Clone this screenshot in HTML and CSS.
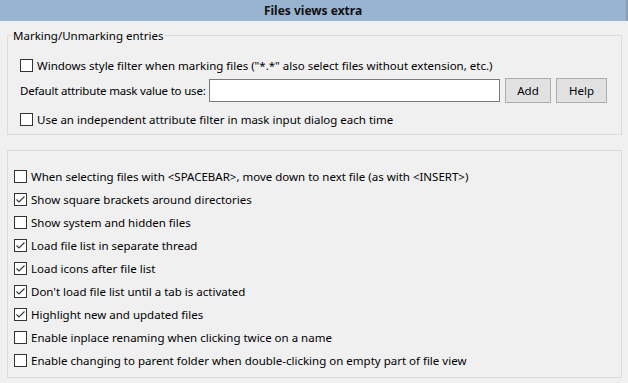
FILE: index.html
```html
<!DOCTYPE html>
<html>
<head>
<meta charset="utf-8">
<link rel="stylesheet" href="styles.css">
</head>
<body>
<div class="header">Files views extra</div>

<fieldset class="group group-marking">
  <legend class="legend">Marking/Unmarking entries</legend>
  <label class="row row-first"><span class="cb"></span><span>Windows style filter when marking files ("*.*" also select files without extension, etc.)</span></label>
  <div class="row row-mask">
    <span class="mask-label">Default attribute mask value to use:</span>
    <span class="input"></span>
    <span class="btn btn-add">Add</span>
    <span class="btn btn-help">Help</span>
  </div>
  <label class="row row-last"><span class="cb"></span><span>Use an independent attribute filter in mask input dialog each time</span></label>
</fieldset>

<div class="group group-options">
  <label class="row"><span class="cb"></span><span>When selecting files with &lt;SPACEBAR&gt;, move down to next file (as with &lt;INSERT&gt;)</span></label>
  <label class="row"><span class="cb checked"><svg viewBox="0 0 11 11" width="11" height="11"><path d="M1.5 5.5 L4 8 L9.5 2.5" fill="none" stroke="#333" stroke-width="1.1"/></svg></span><span>Show square brackets around directories</span></label>
  <label class="row"><span class="cb"></span><span>Show system and hidden files</span></label>
  <label class="row"><span class="cb checked"><svg viewBox="0 0 11 11" width="11" height="11"><path d="M1.5 5.5 L4 8 L9.5 2.5" fill="none" stroke="#333" stroke-width="1.1"/></svg></span><span>Load file list in separate thread</span></label>
  <label class="row"><span class="cb checked"><svg viewBox="0 0 11 11" width="11" height="11"><path d="M1.5 5.5 L4 8 L9.5 2.5" fill="none" stroke="#333" stroke-width="1.1"/></svg></span><span>Load icons after file list</span></label>
  <label class="row"><span class="cb checked"><svg viewBox="0 0 11 11" width="11" height="11"><path d="M1.5 5.5 L4 8 L9.5 2.5" fill="none" stroke="#333" stroke-width="1.1"/></svg></span><span>Don't load file list until a tab is activated</span></label>
  <label class="row"><span class="cb checked"><svg viewBox="0 0 11 11" width="11" height="11"><path d="M1.5 5.5 L4 8 L9.5 2.5" fill="none" stroke="#333" stroke-width="1.1"/></svg></span><span>Highlight new and updated files</span></label>
  <label class="row"><span class="cb"></span><span>Enable inplace renaming when clicking twice on a name</span></label>
  <label class="row"><span class="cb"></span><span>Enable changing to parent folder when double-clicking on empty part of file view</span></label>
</div>
</body>
</html>
```

FILE: styles.css
```css
html, body {
  margin: 0;
  padding: 0;
  background: #f0f0f0;
  font-family: "Noto Sans", "Open Sans", sans-serif;
  font-size: 11.5px;
  color: #000;
  width: 628px;
  height: 383px;
  overflow: hidden;
}

.header {
  height: 21px;
  line-height: 21px;
  background: #99b4d1;
  border-right: 2px solid #8a9fb6;
  text-align: center;
  font-weight: bold;
  font-size: 12px;
  color: #111;
  box-sizing: border-box;
}

.group {
  border: 1px solid #dcdcdc;
  box-sizing: border-box;
  width: 615px;
  margin-left: 7px;
}

.group-marking {
  margin-top: 7px;
  margin-bottom: 0;
  padding: 11px 0 3px 12px;
  min-width: 0;
}

.legend {
  padding: 0 1px;
  margin-left: -8px;
  line-height: 15px;
  height: 15px;
}

.row {
  display: flex;
  align-items: center;
  height: 23px;
  white-space: nowrap;
}

.cb {
  width: 13px;
  height: 13px;
  box-sizing: border-box;
  border: 1px solid #333;
  background: #fff;
  margin-right: 4px;
  flex: none;
  display: flex;
  align-items: center;
  justify-content: center;
}

.cb svg {
  display: block;
}

.row-mask {
  height: 25px;
  margin-top: 1px;
}

.row-last {
  margin-top: 5px;
}

.mask-label {
  flex: none;
  margin-right: 3px;
  letter-spacing: -0.2px;
}

.input {
  flex: 1;
  height: 23px;
  box-sizing: border-box;
  border: 1px solid #7a7a7a;
  background: #fff;
}

.btn {
  height: 25px;
  box-sizing: border-box;
  border: 1px solid #adadad;
  background: #e1e1e1;
  display: flex;
  align-items: center;
  justify-content: center;
  flex: none;
}

.btn-add {
  width: 46px;
  margin-left: 5px;
}

.btn-help {
  width: 51px;
  margin-left: 5px;
  margin-right: 14px;
}

.group-options {
  margin-top: 15px;
  height: 228px;
  padding: 14px 0 5px 6px;
}
```
